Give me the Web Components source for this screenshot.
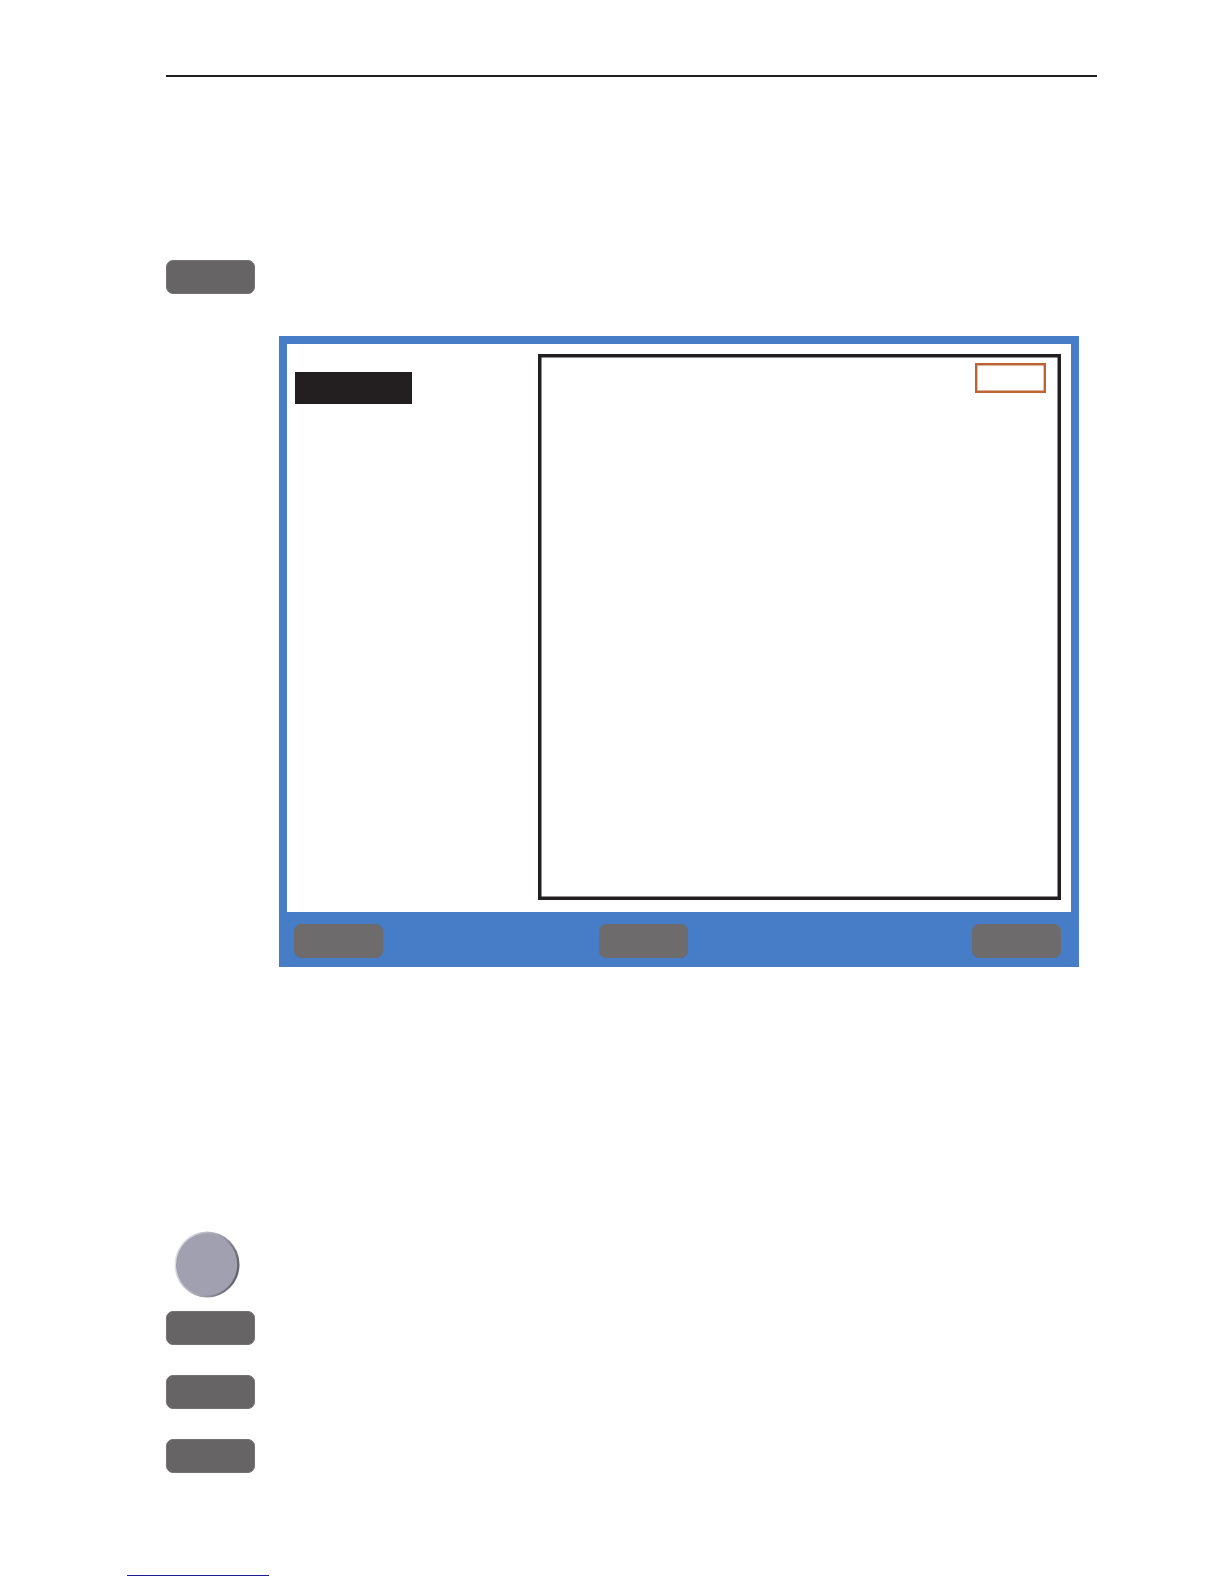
<!DOCTYPE html>
<html>
<head>
<meta charset="utf-8">
<title>Manual page</title>
<style>
  html, body { margin: 0; padding: 0; background: #fff; }
  body { font-family: "Liberation Sans", Arial, sans-serif; }
</style>
</head>
<body>
<manual-page>
  <page-rule></page-rule>
  <key-row style="margin-top:183px"><soft-key></soft-key></key-row>
  <device-screen style="margin-top:42.5px"></device-screen>
  <knob-row style="margin-top:264px"><round-knob></round-knob></knob-row>
  <key-row style="margin-top:13px"><soft-key></soft-key></key-row>
  <key-row style="margin-top:30.5px"><soft-key></soft-key></key-row>
  <key-row style="margin-top:30.5px"><soft-key></soft-key></key-row>
  <page-link></page-link>
</manual-page>

<script>
function shadow(el, html) {
    el.attachShadow({ mode: 'open' }).innerHTML = html;
}

customElements.define('manual-page', class extends HTMLElement {
    constructor() {
        super();
        shadow(this, `
<style>
  :host { display: block; width: 1224px; height: 1584px; overflow: hidden; padding-top: 75px; box-sizing: border-box; }
</style>
<slot></slot>`);
    }
});

customElements.define('page-rule', class extends HTMLElement {
    constructor() {
        super();
        shadow(this, `
<style>
  :host { display: block; height: 2px; margin-left: 166px; width: 931px; background: #231f20; }
</style>`);
    }
});

customElements.define('key-row', class extends HTMLElement {
    constructor() {
        super();
        shadow(this, `
<style>
  :host { display: block; padding-left: 166px; height: 33.5px; }
</style>
<slot></slot>`);
    }
});

customElements.define('knob-row', class extends HTMLElement {
    constructor() {
        super();
        shadow(this, `
<style>
  :host { display: block; padding-left: 174px; height: 67px; }
</style>
<slot></slot>`);
    }
});

customElements.define('soft-key', class extends HTMLElement {
    constructor() {
        super();
        shadow(this, `
<style>
  :host { display: block; width: 88.5px; height: 33.5px; box-sizing: border-box; border-radius: 7px; background: var(--key-bg, #676465); border: 1px solid var(--key-edge, #757273); }
</style>`);
    }
});

customElements.define('round-knob', class extends HTMLElement {
    constructor() {
        super();
        shadow(this, `
<style>
  :host { display: block; width: 66px; height: 67px; }
  svg { display: block; }
</style>
<svg width="66" height="67" viewBox="0 0 66 67">
  <defs>
    <linearGradient id="rim" x1="0" y1="0.35" x2="1" y2="0.65">
      <stop offset="0" stop-color="#e4e4ea"/>
      <stop offset="0.55" stop-color="#a0a0b1"/>
      <stop offset="1" stop-color="#5c5c68"/>
    </linearGradient>
  </defs>
  <ellipse cx="33" cy="33.5" rx="32.5" ry="33" fill="url(#rim)"/>
  <ellipse cx="32.6" cy="33.5" rx="30.6" ry="31.2" fill="#a0a0b1"/>
</svg>`);
    }
});

customElements.define('device-screen', class extends HTMLElement {
    constructor() {
        super();
        shadow(this, `
<style>
  :host { display: block; margin-left: 279px; width: 800px; background: #477cc7; box-sizing: border-box; padding: 8px 8px 0; }
  .body { display: grid; grid-template-columns: 251px 523px; height: 568px; background: #fff; box-sizing: border-box; padding: 10px 10px 12px 0; }
  .side { padding: 18px 0 0 8px; }
  .active { width: 117px; height: 32px; background: #231f20; }
  .panel { border: 3px solid #231f20; box-shadow: inset 0 0 0 0.5px #231f20; box-sizing: border-box; display: flex; justify-content: flex-end; align-items: flex-start; padding: 6px 12px; }
  .tag { width: 71px; height: 30px; box-sizing: border-box; border: 2px solid #bd6434; box-shadow: inset 0 0 0 0.4px #bd6434; }
  .keys { display: flex; gap: 216.5px; height: 55px; padding: 12px 10.5px 0 7px; box-sizing: border-box; --key-bg: #6d6b6b; --key-edge: #6d6b6b; }
  .keys soft-key:last-child { margin-left: auto; }
</style>
<div class="body">
  <div class="side"><div class="active"></div></div>
  <div class="panel"><div class="tag"></div></div>
</div>
<div class="keys">
  <soft-key></soft-key>
  <soft-key></soft-key>
  <soft-key></soft-key>
</div>`);
    }
});

customElements.define('page-link', class extends HTMLElement {
    constructor() {
        super();
        shadow(this, `
<style>
  :host { display: block; height: 1px; width: 142px; margin: 102.5px 0 0 127px; background: #1c1c96; }
</style>`);
    }
});
</script>
</body>
</html>
